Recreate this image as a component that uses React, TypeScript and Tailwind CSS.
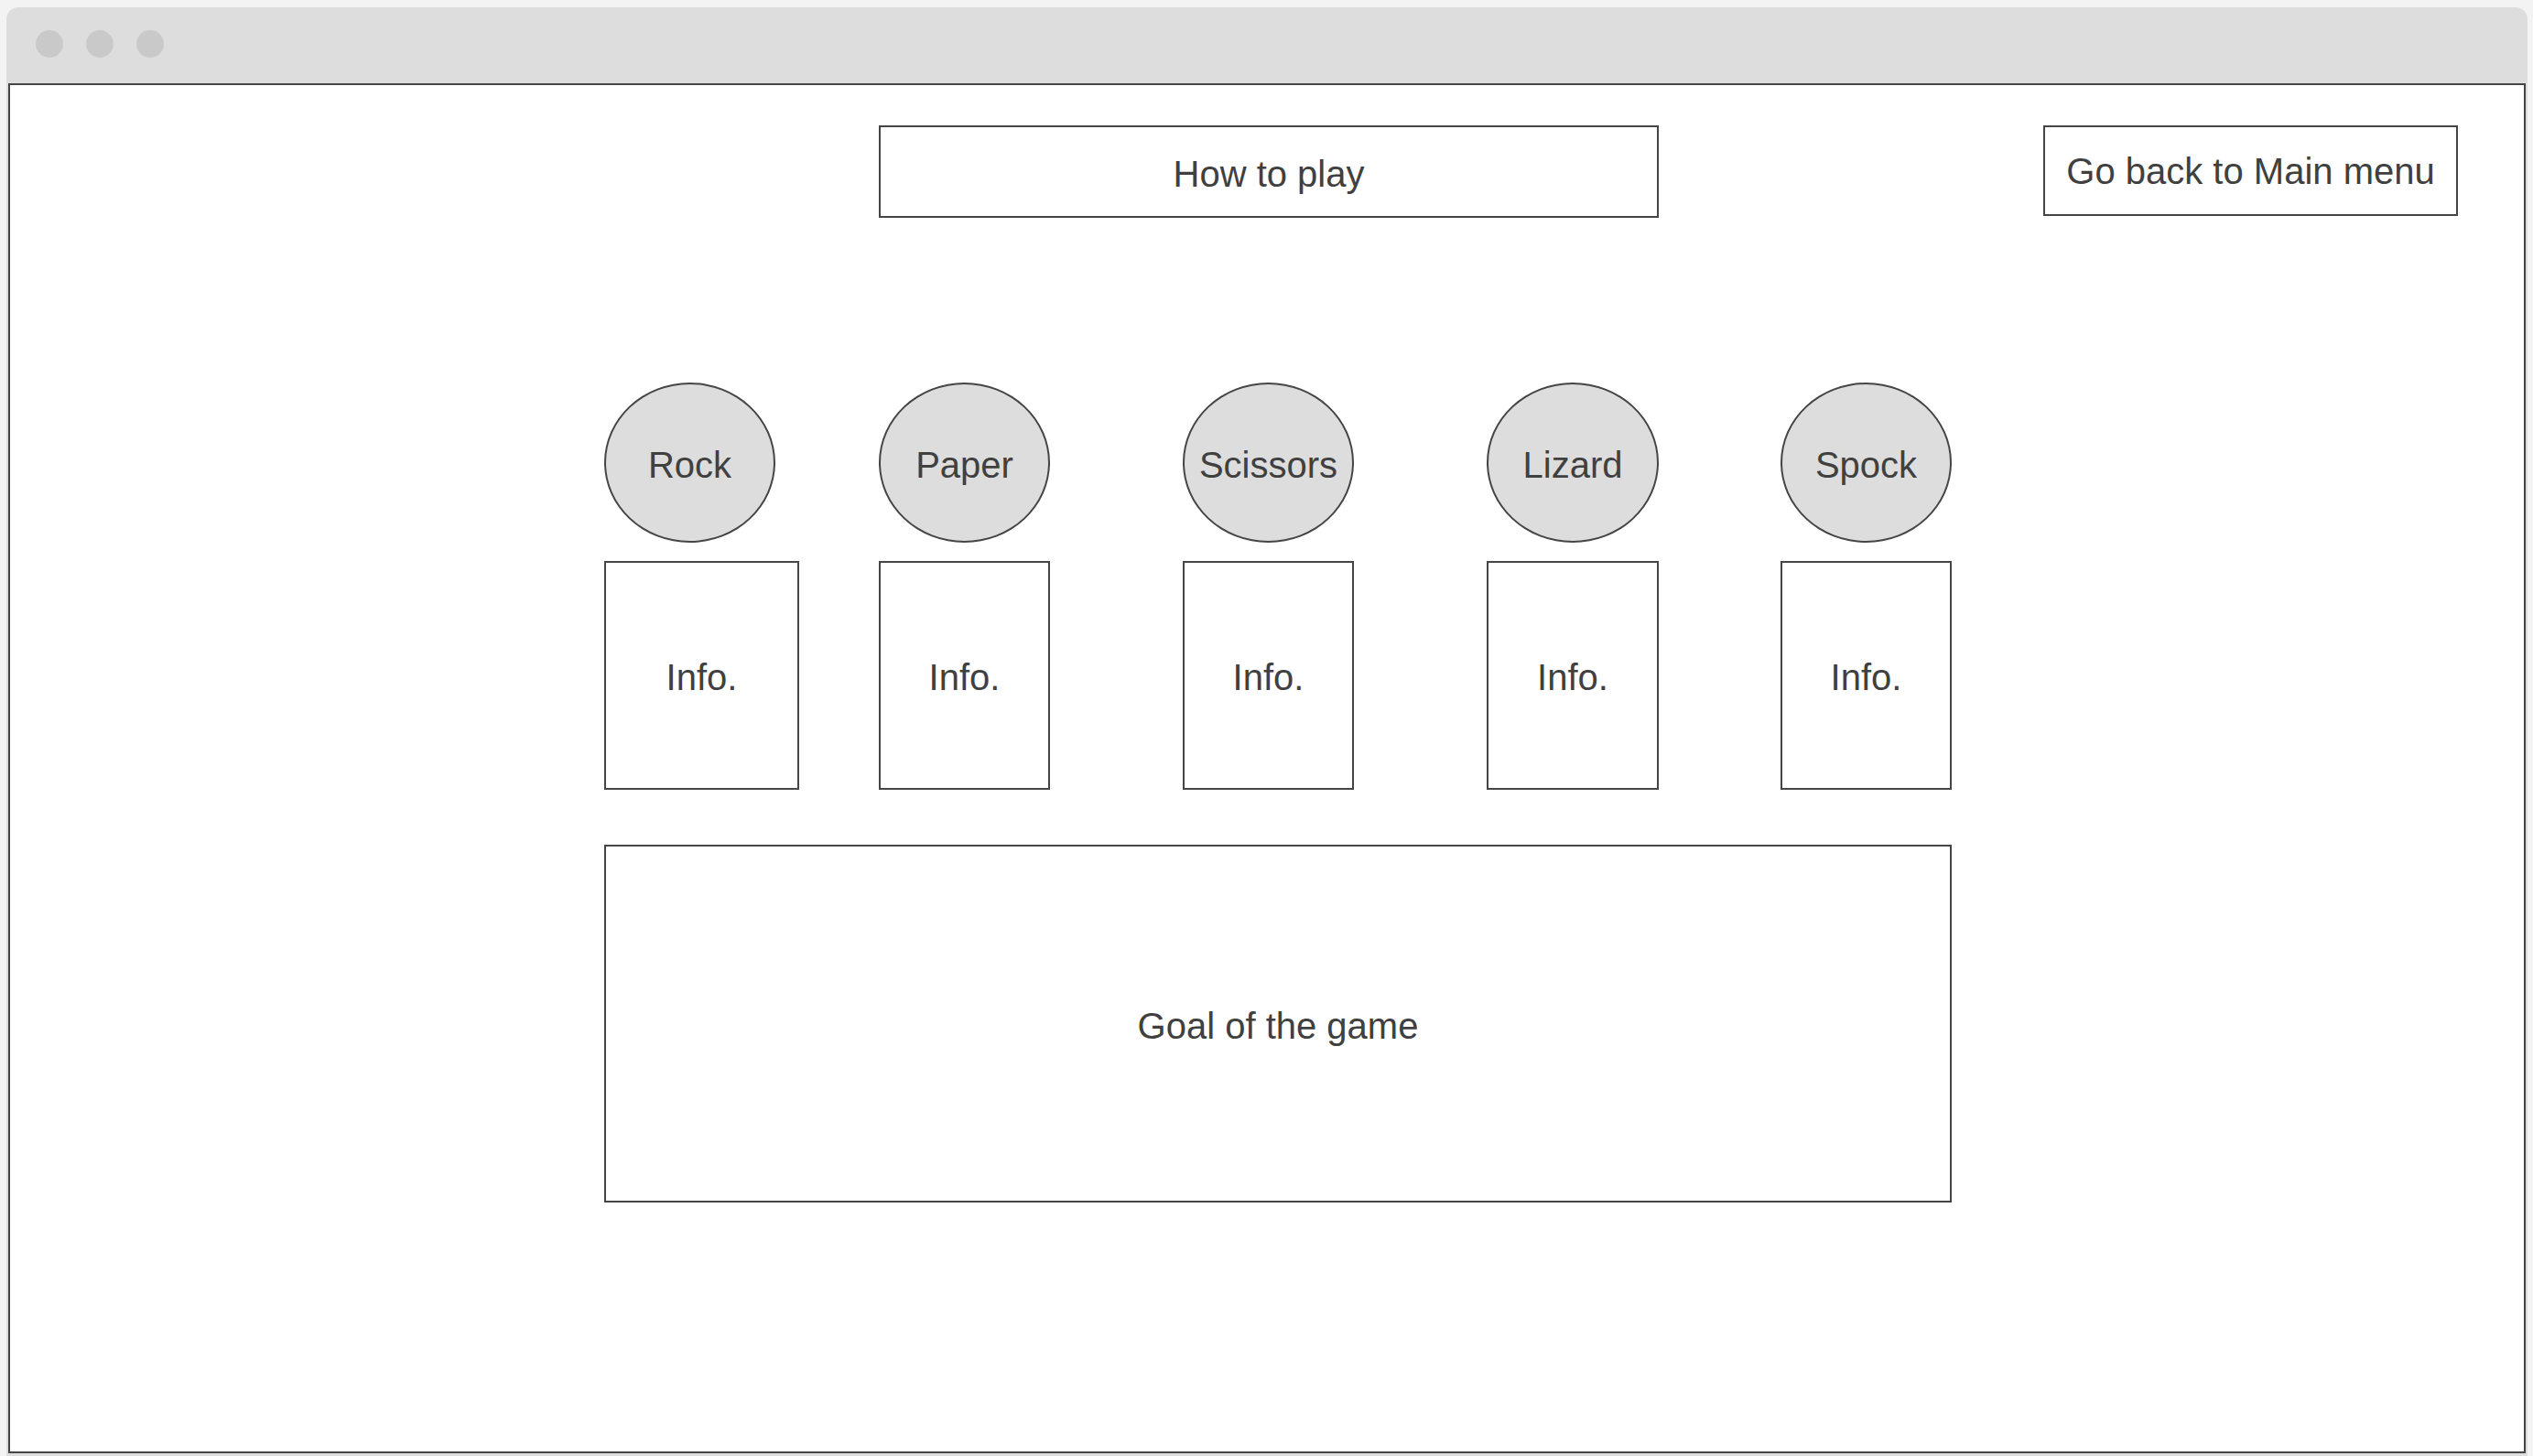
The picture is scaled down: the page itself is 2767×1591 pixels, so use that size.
import React from 'react'

type Move = {
  name: string
  offset: string
  circleW: string
  infoW: string
}

const moves: Move[] = [
  { name: 'Rock', offset: 'ml-[649px]', circleW: 'w-[187px]', infoW: 'w-[213px]' },
  { name: 'Paper', offset: 'ml-[87px]', circleW: 'w-[187px]', infoW: 'w-[187px]' },
  { name: 'Scissors', offset: 'ml-[145px]', circleW: 'w-[187px]', infoW: 'w-[187px]' },
  { name: 'Lizard', offset: 'ml-[145px]', circleW: 'w-[188px]', infoW: 'w-[188px]' },
  { name: 'Spock', offset: 'ml-[133px]', circleW: 'w-[187px]', infoW: 'w-[187px]' },
]

function MoveColumn({ move }: { move: Move }) {
  return (
    <div className={`flex flex-col ${move.offset}`}>
      <div
        className={`${move.circleW} h-[175px] pt-[4px] rounded-[50%] bg-[#dddddd] border-2 border-[#454545] flex items-center justify-center`}
      >
        {move.name}
      </div>
      <div
        className={`${move.infoW} h-[250px] mt-[20px] pt-[4px] border-2 border-[#454545] bg-white flex items-center justify-center`}
      >
        Info.
      </div>
    </div>
  )
}

export default function App() {
  return (
    <div
      className="w-[2767px] h-[1591px] bg-[#f3f3f3] pt-[8px] pl-[7px] overflow-hidden text-[40px] leading-none text-[#404040]"
      style={{ fontFamily: '"Liberation Sans", Arial, sans-serif' }}
    >
      <div className="w-[2754px] h-[1583px] bg-[#dddddd] rounded-t-[13px] flex flex-col">
        {/* title bar */}
        <div className="h-[83px] flex items-start gap-[25px] pl-[32px] pt-[25px] shrink-0">
          <span className="w-[30px] h-[30px] rounded-full bg-[#c9c9c9]" />
          <span className="w-[30px] h-[30px] rounded-full bg-[#c9c9c9]" />
          <span className="w-[30px] h-[30px] rounded-full bg-[#c9c9c9]" />
        </div>

        {/* page */}
        <div className="ml-[2px] w-[2750px] h-[1497px] border-2 border-[#454545] bg-white flex flex-col">
          <div className="flex items-start pt-[44px]">
            <div className="ml-[949px] w-[852px] h-[101px] pt-[4px] border-2 border-[#454545] flex items-center justify-center">
              How to play
            </div>
            <div className="ml-[420px] w-[453px] h-[99px] border-2 border-[#454545] flex items-center justify-center">
              Go back to Main menu
            </div>
          </div>

          <div className="flex items-start mt-[180px]">
            {moves.map((m) => (
              <MoveColumn key={m.name} move={m} />
            ))}
          </div>

          <div className="ml-[649px] mt-[60px] w-[1472px] h-[391px] pt-[4px] border-2 border-[#454545] flex items-center justify-center">
            Goal of the game
          </div>
        </div>
      </div>
    </div>
  )
}
